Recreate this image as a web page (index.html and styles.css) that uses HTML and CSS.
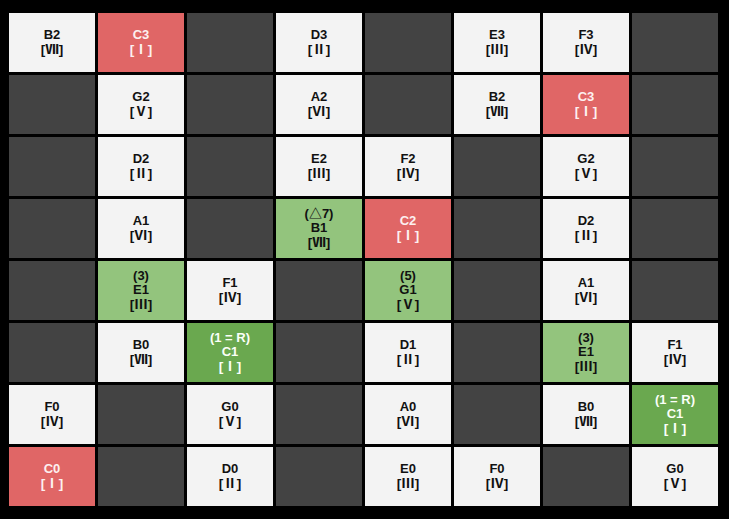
FILE: index.html
```html
<!DOCTYPE html>
<html>
<head>
<meta charset="utf-8">
<link rel="stylesheet" href="styles.css">
</head>
<body>
<div class="board">
  <div class="cell light"><span>B2</span><span class="num">[Ⅶ]</span></div>
  <div class="cell red"><span>C3</span><span class="num">[Ⅰ]</span></div>
  <div class="cell dark"></div>
  <div class="cell light"><span>D3</span><span class="num">[Ⅱ]</span></div>
  <div class="cell dark"></div>
  <div class="cell light"><span>E3</span><span class="num">[Ⅲ]</span></div>
  <div class="cell light"><span>F3</span><span class="num">[Ⅳ]</span></div>
  <div class="cell dark"></div>

  <div class="cell dark"></div>
  <div class="cell light"><span>G2</span><span class="num">[Ⅴ]</span></div>
  <div class="cell dark"></div>
  <div class="cell light"><span>A2</span><span class="num">[Ⅵ]</span></div>
  <div class="cell dark"></div>
  <div class="cell light"><span>B2</span><span class="num">[Ⅶ]</span></div>
  <div class="cell red"><span>C3</span><span class="num">[Ⅰ]</span></div>
  <div class="cell dark"></div>

  <div class="cell dark"></div>
  <div class="cell light"><span>D2</span><span class="num">[Ⅱ]</span></div>
  <div class="cell dark"></div>
  <div class="cell light"><span>E2</span><span class="num">[Ⅲ]</span></div>
  <div class="cell light"><span>F2</span><span class="num">[Ⅳ]</span></div>
  <div class="cell dark"></div>
  <div class="cell light"><span>G2</span><span class="num">[Ⅴ]</span></div>
  <div class="cell dark"></div>

  <div class="cell dark"></div>
  <div class="cell light"><span>A1</span><span class="num">[Ⅵ]</span></div>
  <div class="cell dark"></div>
  <div class="cell lgreen"><span>(△7)</span><span>B1</span><span class="num">[Ⅶ]</span></div>
  <div class="cell red"><span>C2</span><span class="num">[Ⅰ]</span></div>
  <div class="cell dark"></div>
  <div class="cell light"><span>D2</span><span class="num">[Ⅱ]</span></div>
  <div class="cell dark"></div>

  <div class="cell dark"></div>
  <div class="cell lgreen"><span>(3)</span><span>E1</span><span class="num">[Ⅲ]</span></div>
  <div class="cell light"><span>F1</span><span class="num">[Ⅳ]</span></div>
  <div class="cell dark"></div>
  <div class="cell lgreen"><span>(5)</span><span>G1</span><span class="num">[Ⅴ]</span></div>
  <div class="cell dark"></div>
  <div class="cell light"><span>A1</span><span class="num">[Ⅵ]</span></div>
  <div class="cell dark"></div>

  <div class="cell dark"></div>
  <div class="cell light"><span>B0</span><span class="num">[Ⅶ]</span></div>
  <div class="cell green"><span>(1 = R)</span><span>C1</span><span class="num">[Ⅰ]</span></div>
  <div class="cell dark"></div>
  <div class="cell light"><span>D1</span><span class="num">[Ⅱ]</span></div>
  <div class="cell dark"></div>
  <div class="cell lgreen"><span>(3)</span><span>E1</span><span class="num">[Ⅲ]</span></div>
  <div class="cell light"><span>F1</span><span class="num">[Ⅳ]</span></div>

  <div class="cell light"><span>F0</span><span class="num">[Ⅳ]</span></div>
  <div class="cell dark"></div>
  <div class="cell light"><span>G0</span><span class="num">[Ⅴ]</span></div>
  <div class="cell dark"></div>
  <div class="cell light"><span>A0</span><span class="num">[Ⅵ]</span></div>
  <div class="cell dark"></div>
  <div class="cell light"><span>B0</span><span class="num">[Ⅶ]</span></div>
  <div class="cell green"><span>(1 = R)</span><span>C1</span><span class="num">[Ⅰ]</span></div>

  <div class="cell red"><span>C0</span><span class="num">[Ⅰ]</span></div>
  <div class="cell dark"></div>
  <div class="cell light"><span>D0</span><span class="num">[Ⅱ]</span></div>
  <div class="cell dark"></div>
  <div class="cell light"><span>E0</span><span class="num">[Ⅲ]</span></div>
  <div class="cell light"><span>F0</span><span class="num">[Ⅳ]</span></div>
  <div class="cell dark"></div>
  <div class="cell light"><span>G0</span><span class="num">[Ⅴ]</span></div>
</div>
</body>
</html>
```
FILE: styles.css
```css
html, body {
  margin: 0;
  padding: 0;
  background: #000;
}
body {
  width: 729px;
  height: 519px;
  overflow: hidden;
}
.board {
  display: grid;
  grid-template-columns: repeat(8, 86px);
  grid-template-rows: repeat(8, 59px);
  gap: 3px;
  padding: 13px 11px 13px 9px;
}
.cell {
  display: flex;
  flex-direction: column;
  align-items: center;
  justify-content: center;
  font-family: "Liberation Sans", "Noto Sans CJK JP", sans-serif;
  font-weight: bold;
  font-size: 13px;
  line-height: 14px;
  color: #111;
}
.num {
  font-size: 13.5px;
  line-height: 15px;
}
.light { background: #f3f3f3; }
.dark { background: #434343; }
.red { background: #e06666; color: #fdf0f0; }
.lgreen { background: #93c47d; }
.green { background: #6aa84f; color: #fbfff8; }
```
